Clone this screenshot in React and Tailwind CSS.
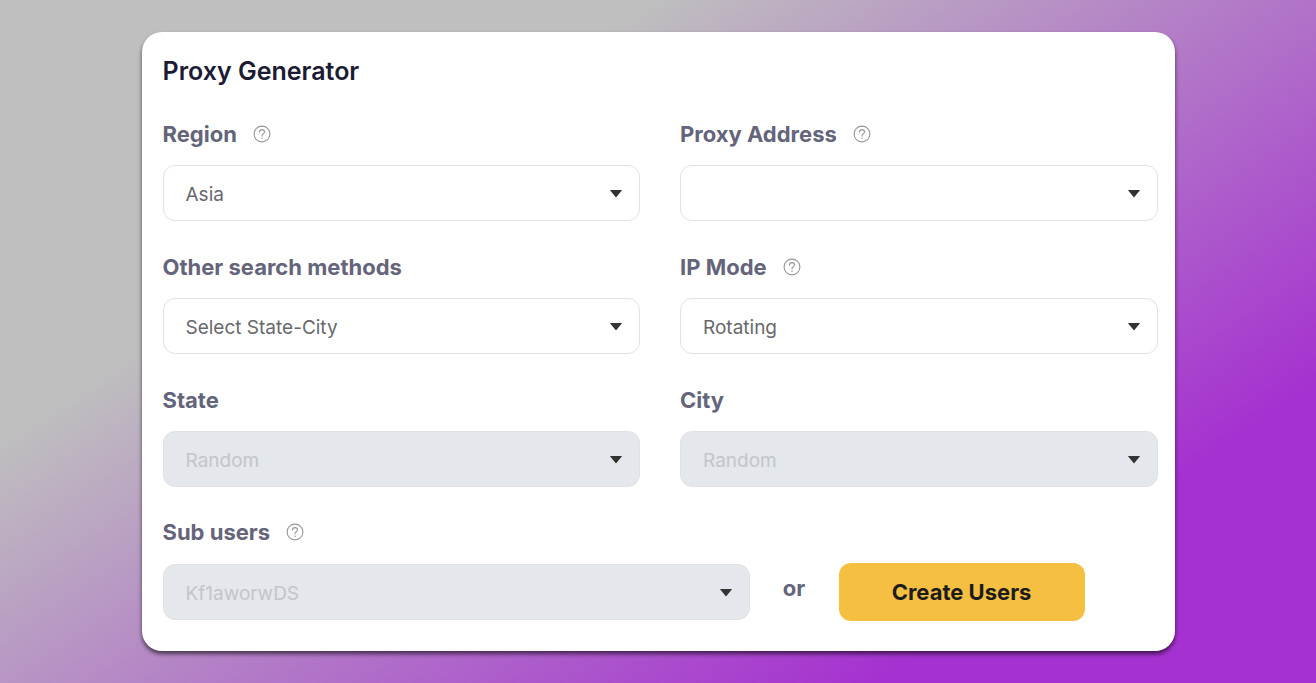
import { useState } from "react";

const HelpIcon = () => (
  <svg width="18" height="18" viewBox="0 0 18 18" fill="none" stroke="#97979d" strokeLinecap="round">
    <circle cx="9" cy="9" r="7.9" strokeWidth="1.1" />
    <path d="M6.5 7.1C6.5 5.6 7.5 4.6 9 4.6s2.5 1 2.500 2.300c0 1.700-2.500 1.900-2.500 3.700v.4" strokeWidth="1.1" />
    <circle cx="9" cy="13.2" r="0.75" fill="#97979d" stroke="none" />
  </svg>
);

const SelectBox = ({ id, options, disabled }) => {
  const [value, setValue] = useState(options[0]);

  return (
    <div className="relative">
      <select
        id={id}
        value={value}
        disabled={disabled}
        onChange={(event) => setValue(event.target.value)}
        className="block h-14 w-full appearance-none rounded-xl border border-[#e2e2e2] bg-white pt-1 pr-12 pl-[22px] text-[19px] text-[#68686c] disabled:bg-[#e4e7eb] disabled:text-[#c3c5c9] disabled:opacity-100"
      >
        {options.map((option) => (
          <option key={option} value={option}>
            {option}
          </option>
        ))}
      </select>
      <svg
        className="pointer-events-none absolute top-[25px] right-[18px]"
        width="12"
        height="8"
        viewBox="0 0 12 8"
        fill="#333333"
      >
        <path d="M0.5 0h11c.4 0 .5.3.3.6L6.4 7.1c-.2.3-.6.3-.8 0L.2.6C0 .3.1 0 .5 0z" />
      </svg>
    </div>
  );
};

const FieldLabel = ({ htmlFor, label, help }) => (
  <div className="mb-4 flex h-[30px] items-center gap-4">
    <label htmlFor={htmlFor} className="text-[22px] font-bold text-[#64647a]">
      {label}
    </label>
    {help && (
      <button type="button" aria-label={`${label} help`}>
        <HelpIcon />
      </button>
    )}
  </div>
);

const fields = [
  { id: "region", label: "Region", help: true, options: ["Asia", "Europe", "America"] },
  { id: "address", label: "Proxy Address", help: true, options: [""] },
  { id: "method", label: "Other search methods", options: ["Select State-City"] },
  { id: "mode", label: "IP Mode", help: true, options: ["Rotating", "Sticky"] },
  { id: "state", label: "State", options: ["Random"], disabled: true },
  { id: "city", label: "City", options: ["Random"], disabled: true },
];

const App = () => {
  return (
    <main className="min-h-screen bg-[linear-gradient(146deg,#bfbfbf_28%,#a531d0_81%)] px-8 py-8 font-[Inter,'Liberation_Sans',sans-serif]">
      <form
        onSubmit={(event) => event.preventDefault()}
        className="mx-auto w-full max-w-[1033px] rounded-[20px] bg-white pt-[21px] pr-[17px] pb-[30px] pl-[21px] shadow-[0_3px_4px_rgba(0,0,0,0.6)]"
      >
        <h1 className="text-[25px] leading-9 font-semibold text-[#1b1b33]">Proxy Generator</h1>

        <div className="mt-[30px] grid grid-cols-2 gap-x-10 gap-y-[31px]">
          {fields.map((field) => (
            <div key={field.id}>
              <FieldLabel htmlFor={field.id} label={field.label} help={field.help} />
              <SelectBox id={field.id} options={field.options} disabled={field.disabled} />
            </div>
          ))}
        </div>

        <div className="mt-[30px]">
          <FieldLabel htmlFor="users" label="Sub users" help />
          <div className="flex items-center">
            <div className="w-[59%]">
              <SelectBox id="users" options={["Kf1aworwDS"]} disabled />
            </div>
            <span className="w-[89px] pb-2 text-center text-[22px] font-bold text-[#64647a]">or</span>
            <button
              type="submit"
              className="h-[58px] w-[246px] rounded-xl bg-[#f5bf42] text-[22px] font-bold text-[#1c1c1c]"
            >
              Create Users
            </button>
          </div>
        </div>
      </form>
    </main>
  );
};

export default App;
